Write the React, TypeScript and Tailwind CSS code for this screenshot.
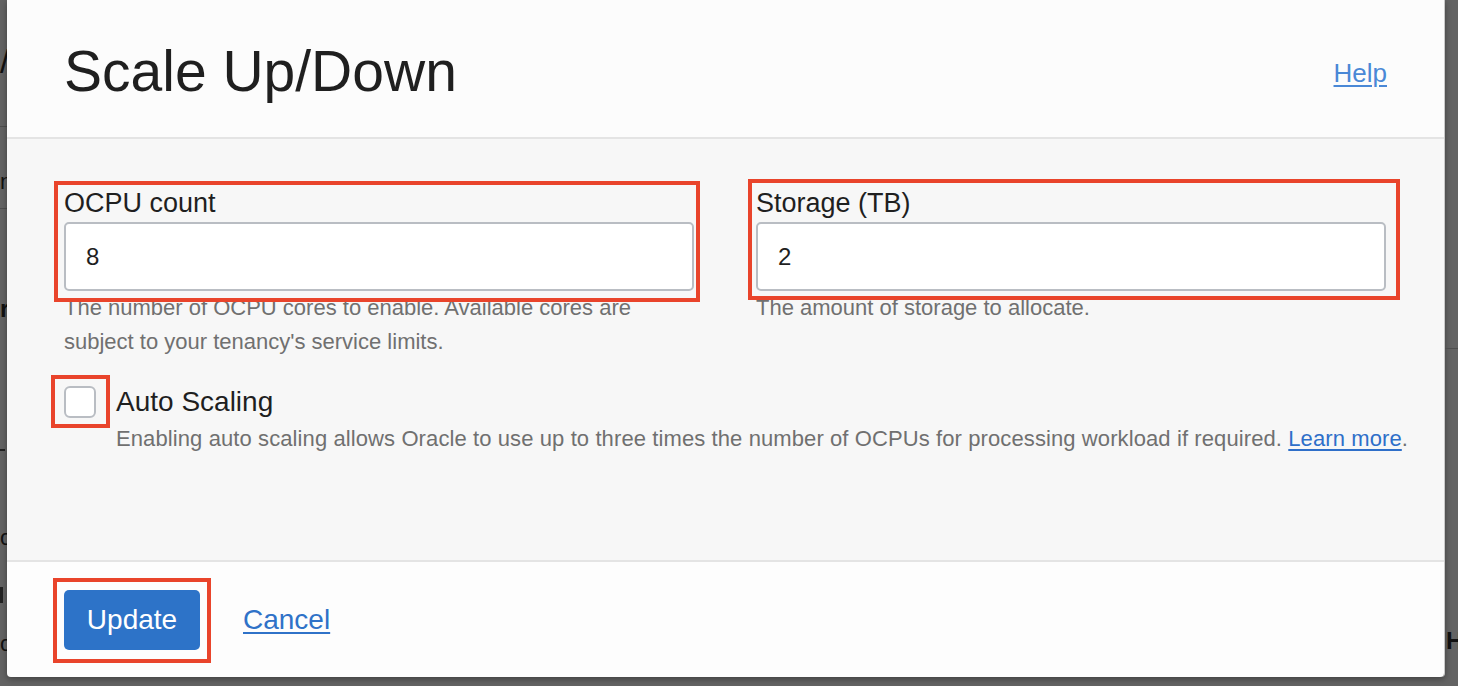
import React from "react";

function Annotation({ className }: { className: string }) {
  // red highlight box drawn over the screenshot
  return <div className={`pointer-events-none absolute border-4 border-[#e9442b] ${className}`} />;
}

function Field({
  label,
  value,
  help,
  box,
}: {
  label: string;
  value: string;
  help: string;
  box: string;
}) {
  return (
    <div>
      <div className="relative">
        <label className="block text-[27px] leading-[30px] text-[#1f1f1f]">{label}</label>
        <input
          readOnly
          value={value}
          className="mt-[4px] block h-[69px] w-full rounded-[5px] border-2 border-[#b9bdc3] bg-white px-[20px] text-[24px] text-[#1f1f1f] outline-none"
        />
        <Annotation className={box} />
      </div>
      <p className="max-w-[600px] text-[22px] leading-[34px] text-[#707070]">{help}</p>
    </div>
  );
}

export default function App() {
  return (
    <div className="flex h-[686px] w-[1458px] overflow-hidden bg-[#636363] font-['Liberation_Sans',Arial,sans-serif]">
      {/* slivers of the page behind the overlay */}
      <div className="flex w-[7px] shrink-0 flex-col overflow-hidden text-[#111]">
        <span className="mt-[44px] text-[34px] leading-none">/</span>
        <div className="mt-[48px] h-px w-full bg-[#4e4e4e]" />
        <span className="mt-[44px] text-[22px] leading-none">n</span>
        <div className="mt-[15px] h-px w-full bg-[#4e4e4e]" />
        <span className="mt-[88px] text-[24px] font-bold leading-none">r</span>
        <div className="mt-[128px] h-[2px] w-[5px] bg-[#222]" />
        <span className="mt-[76px] text-[22px] leading-none">o</span>
        <div className="mt-[38px] h-[16px] w-[3px] bg-[#222]" />
        <span className="mt-[30px] text-[22px] leading-none">o</span>
      </div>

      <div className="flex h-[677px] w-[1438px] min-w-0 shrink-0 flex-col rounded-b-[4px] border-r border-[#c9c9c9] shadow-[0_2px_6px_rgba(0,0,0,0.35)]">
        {/* header */}
        <div className="flex h-[139px] shrink-0 items-start justify-between border-b-2 border-[#e4e4e4] bg-[#fcfcfc] px-[57px] pt-[43px]">
          <h1 className="text-[57px] leading-none text-[#1f1f1f]">Scale Up/Down</h1>
          <a href="#" className="mt-[17px] text-[26px] leading-none text-[#4a88d6] underline underline-offset-[3px]">
            Help
          </a>
        </div>

        {/* body */}
        <div className="min-w-0 flex-1 bg-[#f7f7f7] px-[57px] pt-[49px]">
          <div className="grid grid-cols-[630px_630px] gap-x-[62px]">
            <Field
              label="OCPU count"
              value="8"
              help="The number of OCPU cores to enable. Available cores are subject to your tenancy's service limits."
              box="-bottom-[11px] -left-[10px] -right-[6px] -top-[7px]"
            />
            <Field
              label="Storage (TB)"
              value="2"
              help="The amount of storage to allocate."
              box="-bottom-[9px] -left-[8px] -right-[14px] -top-[9px]"
            />
          </div>

          <div className="mt-[27px] flex items-start gap-[20px]">
            <div className="relative shrink-0">
              <div className="h-[32px] w-[32px] rounded-[6px] border-2 border-[#b9bdc3] bg-white" />
              <Annotation className="-bottom-[10px] -left-[13px] -right-[14px] -top-[11px]" />
            </div>
            <div className="min-w-0">
              <div className="text-[28px] leading-[32px] text-[#1f1f1f]">Auto Scaling</div>
              <p className="mt-[4px] whitespace-nowrap text-[22px] leading-[34px] tracking-[0.1px] text-[#707070]">
                Enabling auto scaling allows Oracle to use up to three times the number of OCPUs for processing
                workload if required.{" "}
                <a href="#" className="text-[#2e6fc9] underline underline-offset-[3px]">
                  Learn more
                </a>
                .
              </p>
            </div>
          </div>
        </div>

        {/* footer */}
        <div className="flex h-[117px] shrink-0 items-start gap-[43px] rounded-b-[4px] border-t-2 border-[#e4e4e4] bg-[#fdfdfd] px-[57px] pt-[28px]">
          <div className="relative">
            <button className="h-[60px] w-[136px] rounded-[5px] bg-[#2d73c8] text-[28px] text-white">Update</button>
            <Annotation className="-bottom-[13px] -left-[11px] -right-[11px] -top-[12px]" />
          </div>
          <a href="#" className="mt-[12px] text-[28px] leading-[36px] text-[#2f72c8] underline underline-offset-[3px]">
            Cancel
          </a>
        </div>
      </div>

      <div className="flex w-[13px] shrink-0 flex-col overflow-hidden text-[#111]">
        <div className="mt-[348px] h-px w-full bg-[#4e4e4e]" />
        <span className="mt-[280px] whitespace-nowrap pl-[1px] text-[24px] font-bold leading-none">Ha</span>
      </div>
    </div>
  );
}
